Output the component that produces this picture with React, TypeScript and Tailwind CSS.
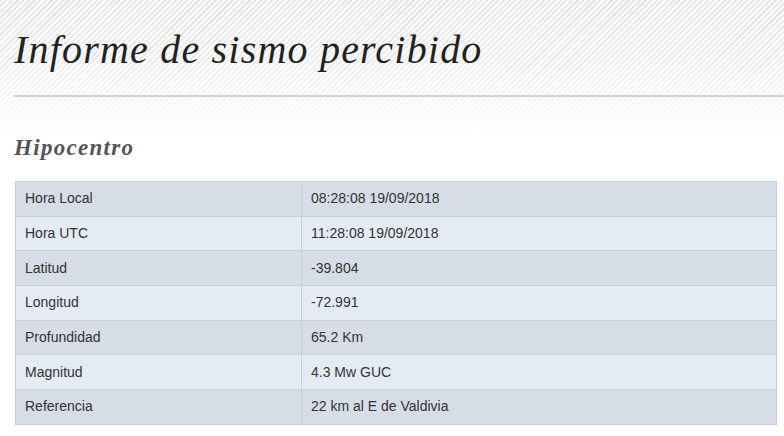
const rows = [
  ["Hora Local", "08:28:08 19/09/2018"],
  ["Hora UTC", "11:28:08 19/09/2018"],
  ["Latitud", "-39.804"],
  ["Longitud", "-72.991"],
  ["Profundidad", "65.2 Km"],
  ["Magnitud", "4.3 Mw GUC"],
  ["Referencia", "22 km al E de Valdivia"],
];

export default function App() {
  return (
    <div className="w-[784px] h-[436px] overflow-hidden bg-white bg-no-repeat bg-[length:100%_135px] bg-[image:linear-gradient(to_bottom,rgba(255,255,255,0)_0%,rgba(255,255,255,0.3)_45%,#ffffff_100%),repeating-linear-gradient(135deg,#e2e2e2_0px,#e2e2e2_1.5px,#fbfbfb_1.5px,#fbfbfb_4px)]">
      <div className="pl-[14px] pt-[30px]">
        <h1 className="text-[40px] leading-none italic tracking-[1.2px] text-[#222] font-['Liberation_Serif',serif]">
          Informe de sismo percibido
        </h1>
        <div className="mt-[25px] h-[2px] bg-[#d2d2d2]" />
      </div>
      <div className="px-[15px]">
        <h2 className="mt-[39px] -ml-[1px] text-[23px] leading-none font-bold italic tracking-[1.3px] text-[#555] font-['Liberation_Serif',serif]">
          Hipocentro
        </h2>
        <table className="mt-[22px] w-[762px] border-collapse border border-[#c7cfd9] font-['Liberation_Sans',Arial,sans-serif] text-[14px] text-[#333]">
          <tbody>
            {rows.map(([k, v], i) => (
              <tr key={k} className={i % 2 === 0 ? "bg-[#d6dde6]" : "bg-[#e5ebf5]"}>
                <td className="w-[286px] h-[34.7px] pl-[9px] border border-[#c7cfd9]">{k}</td>
                <td className="h-[34.7px] pl-[9px] border border-[#c7cfd9]">{v}</td>
              </tr>
            ))}
          </tbody>
        </table>
      </div>
    </div>
  );
}
